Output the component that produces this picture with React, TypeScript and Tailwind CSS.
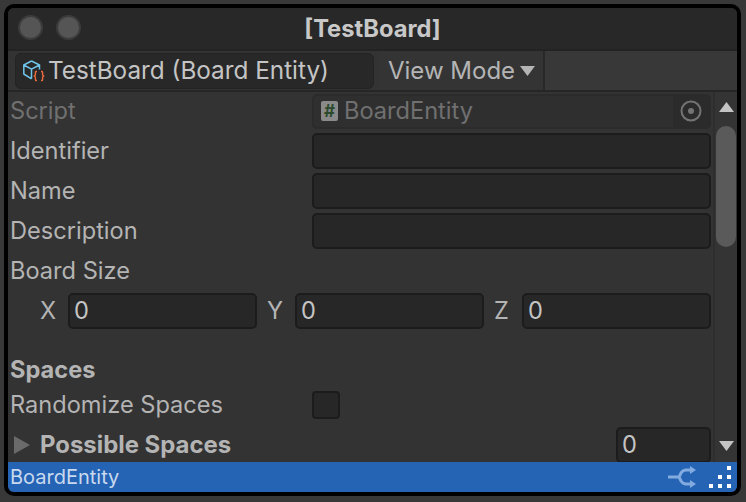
const fieldClass = "h-[36px] rounded-[5px] border-2 border-[#1c1c1c] bg-[#272727]";

function CubeIcon() {
    return (
        <svg width="22" height="22" viewBox="0 0 22 22" fill="none" className="shrink-0">
            <path d="M8.5 1 L16.5 5 V9.5 M8.5 1 L0.8 5 V14 L8.5 18.8 M0.8 5 L8.5 9.2 L16.5 5 M8.5 9.2 V18.8" stroke="#6fc6ea" strokeWidth="1.5" strokeLinejoin="round" />
            <path d="M14 11.5 H13 Q12.4 11.5 12.4 12.5 V15 L11.3 16 L12.4 17 V19.5 Q12.4 20.5 13 20.5 H14 M18 11.5 H19 Q19.6 11.5 19.6 12.5 V15 L20.7 16 L19.6 17 V19.5 Q19.6 20.5 19 20.5 H18" stroke="#ee6a3c" strokeWidth="1.4" />
        </svg>
    );
}

function Row({ label, children, muted, first }: { label: string; children?: React.ReactNode; muted?: boolean; first?: boolean }) {
    return (
        <div className={`flex shrink-0 items-center ${first ? "h-[38px]" : "h-[40px]"}`}>
            <span className={`w-[302px] text-[23.6px] ${muted ? "text-[#707070]" : "text-[#b4b4b4]"}`}>{label}</span>
            <div className="flex-1">{children}</div>
        </div>
    );
}

function AxisField({ axis }: { axis: string }) {
    return (
        <div className="flex flex-1 items-center">
            <span className="w-[28px] text-[23.6px] text-[#b4b4b4]">{axis}</span>
            <div className={`${fieldClass} flex flex-1 items-center pl-[4px] text-[23.6px] text-[#c4c4c4]`}>0</div>
        </div>
    );
}

export default function App() {
    return (
        <div className="h-[502px] w-[746px] overflow-hidden bg-[#383838] pb-[6px] pl-[4px] pr-[5px] pt-[4px] font-['Inter',sans-serif]">
            <div className="flex h-full flex-col overflow-hidden rounded-[10px] border-4 border-black bg-[#333333]">
                {/* title bar */}
                <div className="relative flex h-[43px] shrink-0 items-center justify-center border-b-2 border-[#232323] bg-[#282828]">
                    <div className="absolute left-[10px] top-[7px] flex gap-[13px]">
                        <div className="h-[25px] w-[25px] rounded-full border-2 border-[#3c3c3c] bg-[#555555]" />
                        <div className="h-[25px] w-[25px] rounded-full border-2 border-[#3c3c3c] bg-[#555555]" />
                    </div>
                    <span className="text-[23.7px] font-bold text-[#c8c8c8]">[TestBoard]</span>
                </div>

                {/* toolbar */}
                <div className="flex h-[41px] shrink-0 items-stretch border-b-2 border-[#262626] bg-[#383838]">
                    <div className="flex w-[372px] items-center bg-[#333333] pl-[7px]">
                        <div className="flex h-[36px] w-[359px] items-center gap-[3px] rounded-[6px] border border-[#232323] bg-[#282828] pl-[7px] text-[24.3px] text-[#c4c4c4]">
                            <CubeIcon />
                            <span>TestBoard (Board Entity)</span>
                        </div>
                    </div>
                    <div className="flex w-[165px] items-center gap-[5px] border-r-2 border-[#282828] bg-[#343434] pl-[8px] text-[24px] text-[#b4b4b4]">
                        View Mode
                        <svg width="15" height="10" viewBox="0 0 15 10"><path d="M0 0 H15 L7.5 10 Z" fill="#b4b4b4" /></svg>
                    </div>
                </div>

                {/* inspector body */}
                <div className="flex min-h-0 flex-1">
                    <div className="flex min-w-0 flex-1 flex-col overflow-hidden px-[2px]">
                        <Row label="Script" muted first>
                            <div className="flex h-[35px] items-center rounded-[5px] border-2 border-[#2b2b2b] bg-[#2f2f2f] pl-[7px] text-[23.6px] text-[#707070]">
                                <div className="flex h-[20px] w-[17px] items-center justify-center rounded-[2px] bg-[#8a8a8a] text-[17px] font-bold leading-none text-[#2c4a2c]">#</div>
                                <span className="ml-[6px] flex-1">BoardEntity</span>
                                <div className="flex h-full w-[36px] items-center justify-center rounded-r-[4px] bg-[#2b2b2b]">
                                    <svg width="22" height="22" viewBox="0 0 22 22">
                                        <circle cx="11" cy="11" r="9.5" fill="none" stroke="#747474" strokeWidth="2" />
                                        <circle cx="11" cy="11" r="3" fill="#747474" />
                                    </svg>
                                </div>
                            </div>
                        </Row>
                        <div className="h-[1px] shrink-0" />
                        <Row label="Identifier"><div className={fieldClass} /></Row>
                        <Row label="Name"><div className={fieldClass} /></Row>
                        <Row label="Description"><div className={fieldClass} /></Row>
                        <div className="flex h-[40px] shrink-0 items-center text-[23.6px] text-[#b4b4b4]">Board Size</div>
                        <div className="flex h-[40px] shrink-0 items-center gap-[10px] pl-[30px]">
                            <AxisField axis="X" />
                            <AxisField axis="Y" />
                            <AxisField axis="Z" />
                        </div>
                        <div className="flex h-[54px] shrink-0 items-end text-[23.6px] font-bold leading-[31px] text-[#b4b4b4]">Spaces</div>
                        <Row label="Randomize Spaces">
                            <div className="h-[28px] w-[28px] rounded-[4px] border-2 border-[#1c1c1c] bg-[#272727]" />
                        </Row>
                        <div className="flex h-[40px] shrink-0 items-center">
                            <svg width="16" height="18" viewBox="0 0 16 18" className="ml-[4px] shrink-0"><path d="M0 0 L16 9 L0 18 Z" fill="#6a6a6a" /></svg>
                            <span className="ml-[10px] flex-1 text-[23.9px] font-bold text-[#b4b4b4]">Possible Spaces</span>
                            <div className={`${fieldClass} flex w-[95px] items-center pl-[4px] text-[23.6px] text-[#c4c4c4]`}>0</div>
                        </div>
                    </div>

                    {/* scrollbar */}
                    <div className="flex w-[24px] shrink-0 flex-col items-center border-l-2 border-[#2e2e2e] bg-[#343434]">
                        <svg width="15" height="10" viewBox="0 0 15 10" className="mt-[10px] shrink-0"><path d="M0 10 H15 L7.5 0 Z" fill="#c4c4c4" /></svg>
                        <div className="mt-[14px] h-[121px] w-[20px] rounded-full bg-[#5a5a5a]" />
                        <div className="flex-1" />
                        <svg width="15" height="10" viewBox="0 0 15 10" className="mb-[11px] shrink-0"><path d="M0 0 H15 L7.5 10 Z" fill="#c4c4c4" /></svg>
                    </div>
                </div>

                {/* status bar */}
                <div className="flex h-[30px] shrink-0 items-center justify-between bg-[#2563b5] pl-[2px] text-[20px] text-[#c9d9ee]">
                    <span>BoardEntity</span>
                    <div className="flex items-center">
                        <svg width="30" height="22" viewBox="0 0 30 22" fill="none" stroke="#82ace0" strokeWidth="3">
                            <path d="M0 11 H10 M24 4 H18 Q15 4 13 7 L11 11 L13 15 Q15 18 18 18 H24" />
                            <path d="M22 0 L28 4 L22 8 Z M22 14 L28 18 L22 22 Z" fill="#82ace0" stroke="none" />
                        </svg>
                        <svg width="24" height="24" viewBox="0 0 24 24" className="ml-[11px] mr-[4px]" fill="#ffffff">
                            <rect x="18" y="1" width="4" height="4" />
                            <rect x="9" y="10" width="4" height="4" />
                            <rect x="18" y="10" width="4" height="4" />
                            <rect x="0" y="19" width="4" height="4" />
                            <rect x="9" y="19" width="4" height="4" />
                            <rect x="18" y="19" width="4" height="4" />
                        </svg>
                    </div>
                </div>
            </div>
        </div>
    );
}
